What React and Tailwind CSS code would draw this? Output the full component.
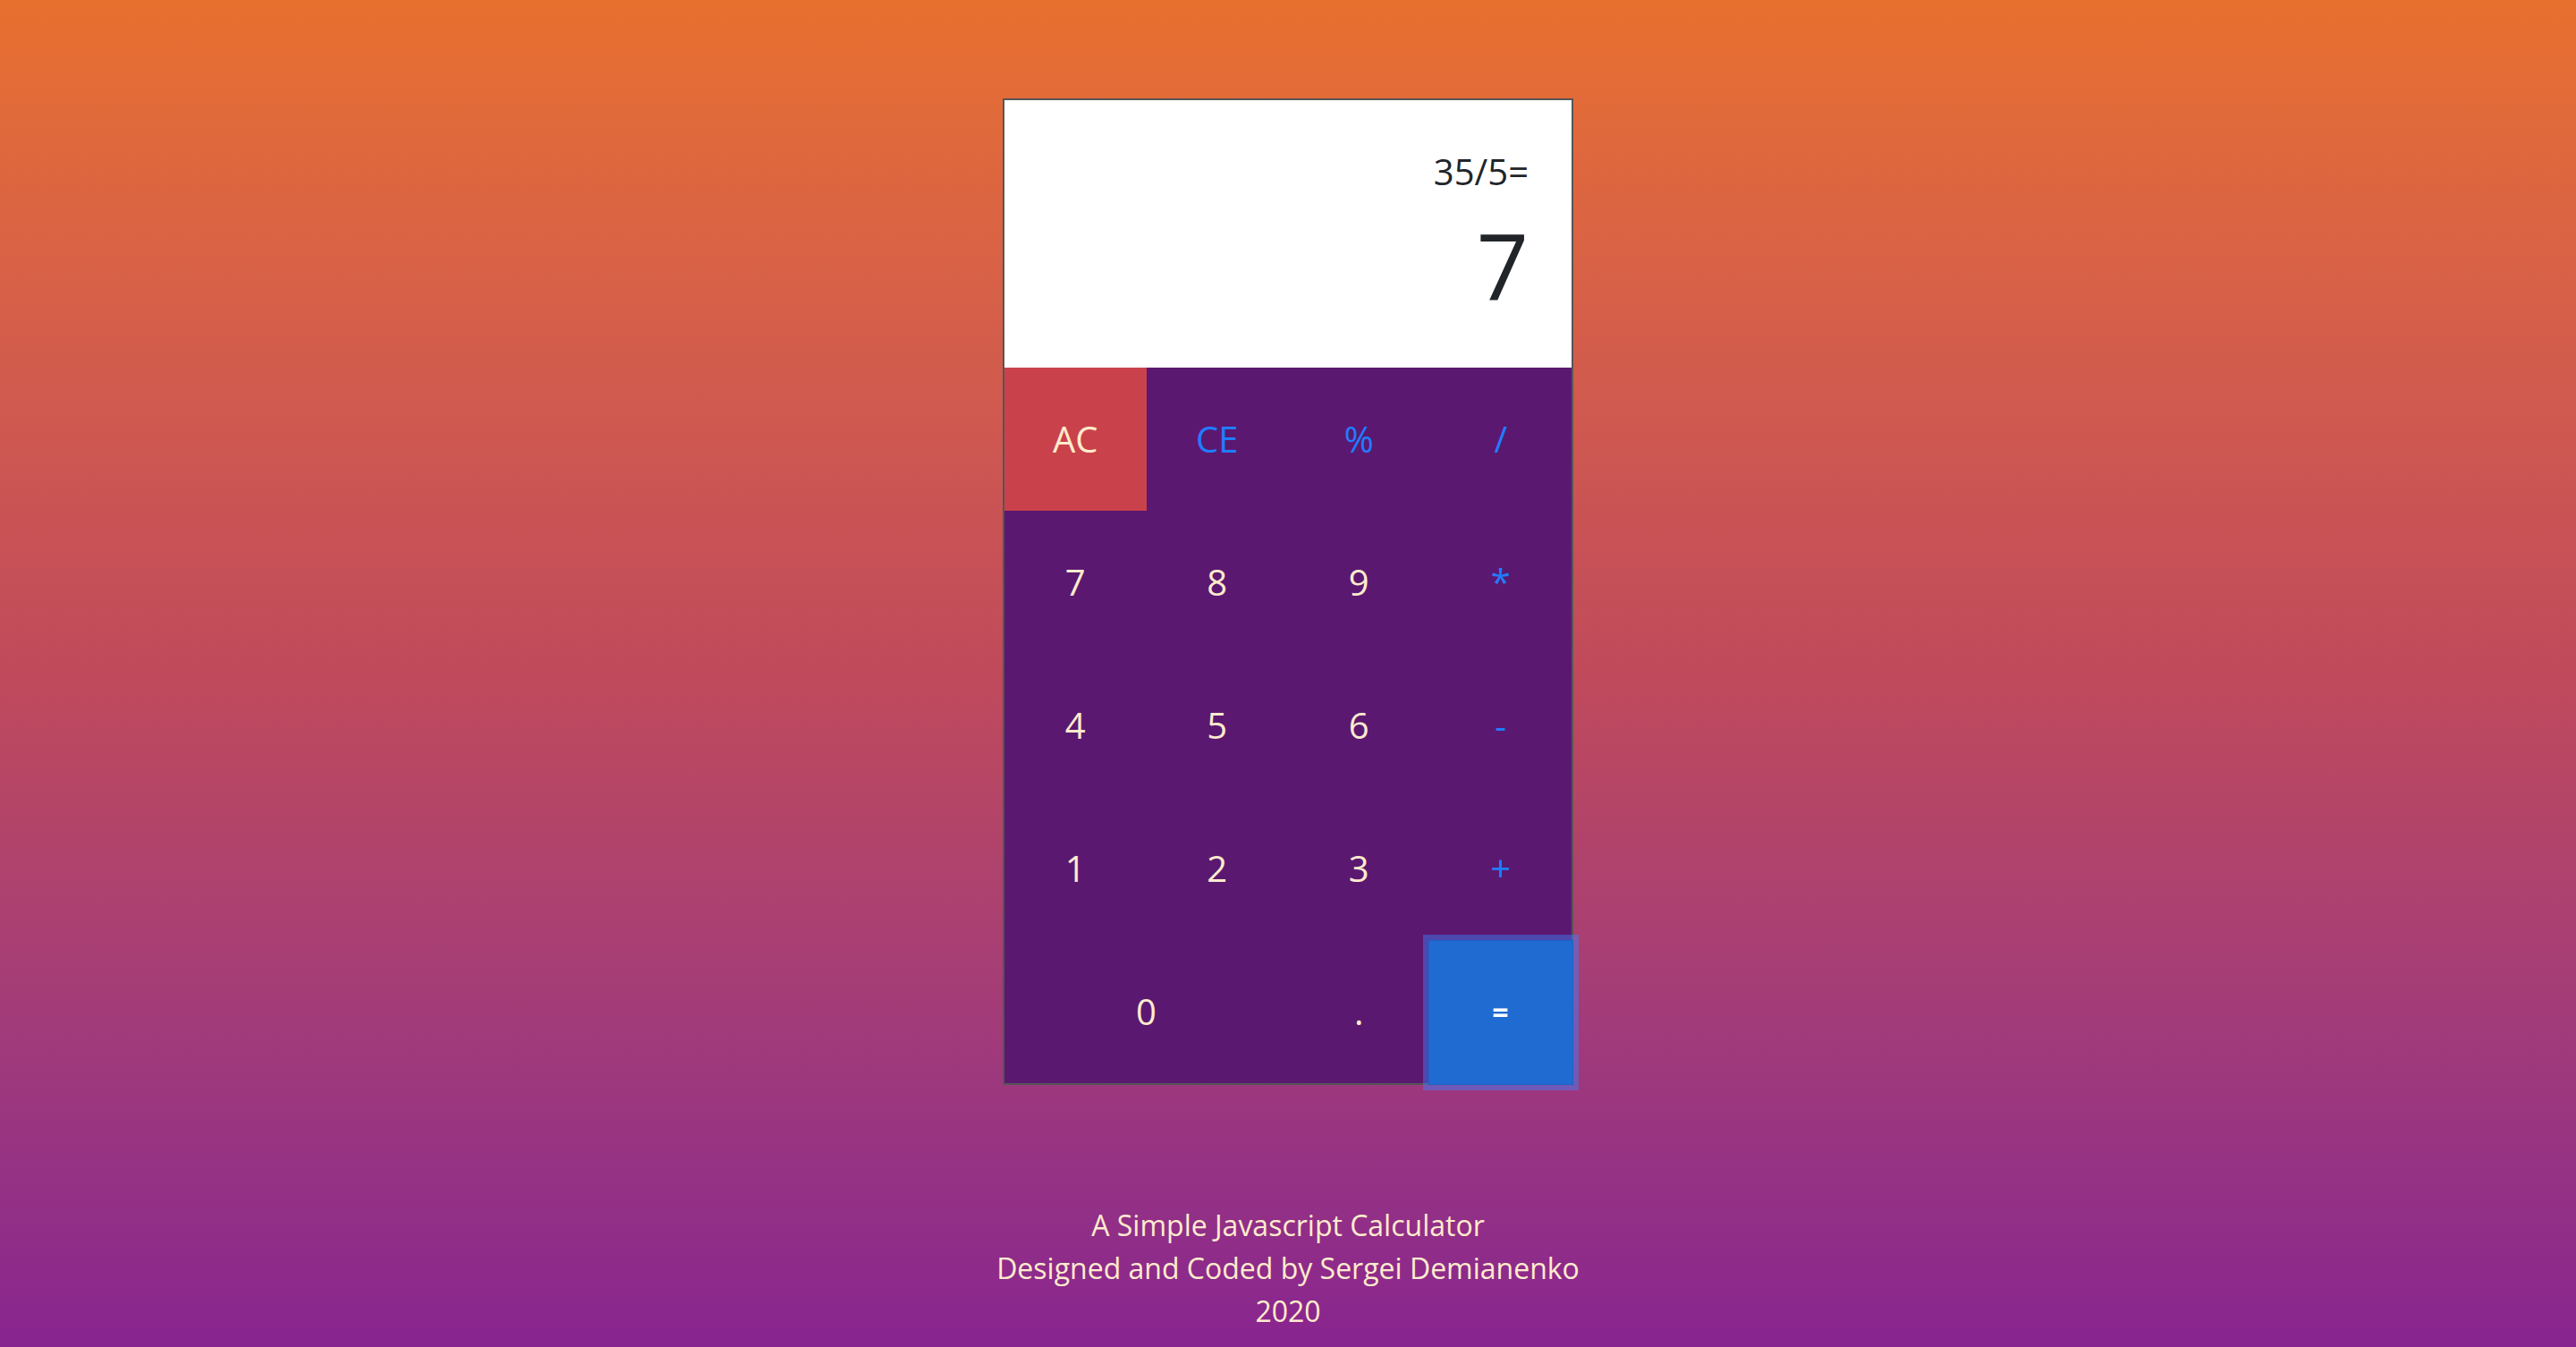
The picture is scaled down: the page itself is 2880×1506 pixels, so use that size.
import React from "react";

const font = { fontFamily: '"Open Sans", "Noto Sans", sans-serif' };

function Key({ children, className = "" }) {
  return (
    <div className={`flex items-center justify-center h-[160px] text-[40px] leading-none ${className}`}>
      {children}
    </div>
  );
}

export default function App() {
  return (
    <div
      className="min-h-screen w-full flex flex-col items-center bg-gradient-to-b from-[#e8702e] via-[#c04a5b] to-[#88248f] pt-[110px]"
      style={font}
    >
      <div className="w-[638px] border-2 border-[#555555] bg-[#5b1870]">
        <div className="h-[299px] bg-white text-right pr-[48px] pt-[50px] text-[#212529]">
          <div className="text-[40px] leading-[60px]">35/5=</div>
          <div className="text-[102px] leading-none mt-[24px] font-normal">7</div>
        </div>
        <div className="grid grid-cols-4 text-[#ffebcd]">
          <Key className="bg-[#c9424b]">AC</Key>
          <Key className="text-[#1f7dff]">CE</Key>
          <Key className="text-[#1f7dff]">%</Key>
          <Key className="text-[#1f7dff]">/</Key>
          <Key>7</Key>
          <Key>8</Key>
          <Key>9</Key>
          <Key className="text-[#1f7dff]">*</Key>
          <Key>4</Key>
          <Key>5</Key>
          <Key>6</Key>
          <Key className="text-[#1f7dff]">-</Key>
          <Key>1</Key>
          <Key>2</Key>
          <Key>3</Key>
          <Key className="text-[#1f7dff]">+</Key>
          <Key className="col-span-2">0</Key>
          <Key>.</Key>
          <div className="relative h-[160px]">
            <div className="absolute left-[-2px] top-0 w-[162px] h-[162px] flex items-center justify-center bg-[#206bd1] border border-[#1c62c2] text-white text-[32px] font-bold leading-none shadow-[0_0_0_6px_rgba(60,130,255,0.45)]">
              =
            </div>
          </div>
        </div>
      </div>
      <div className="mt-[133px] text-center text-[32px] leading-[48px] text-[#ffebcd]">
        <div>A Simple Javascript Calculator</div>
        <div>Designed and Coded by Sergei Demianenko</div>
        <div>2020</div>
      </div>
    </div>
  );
}
